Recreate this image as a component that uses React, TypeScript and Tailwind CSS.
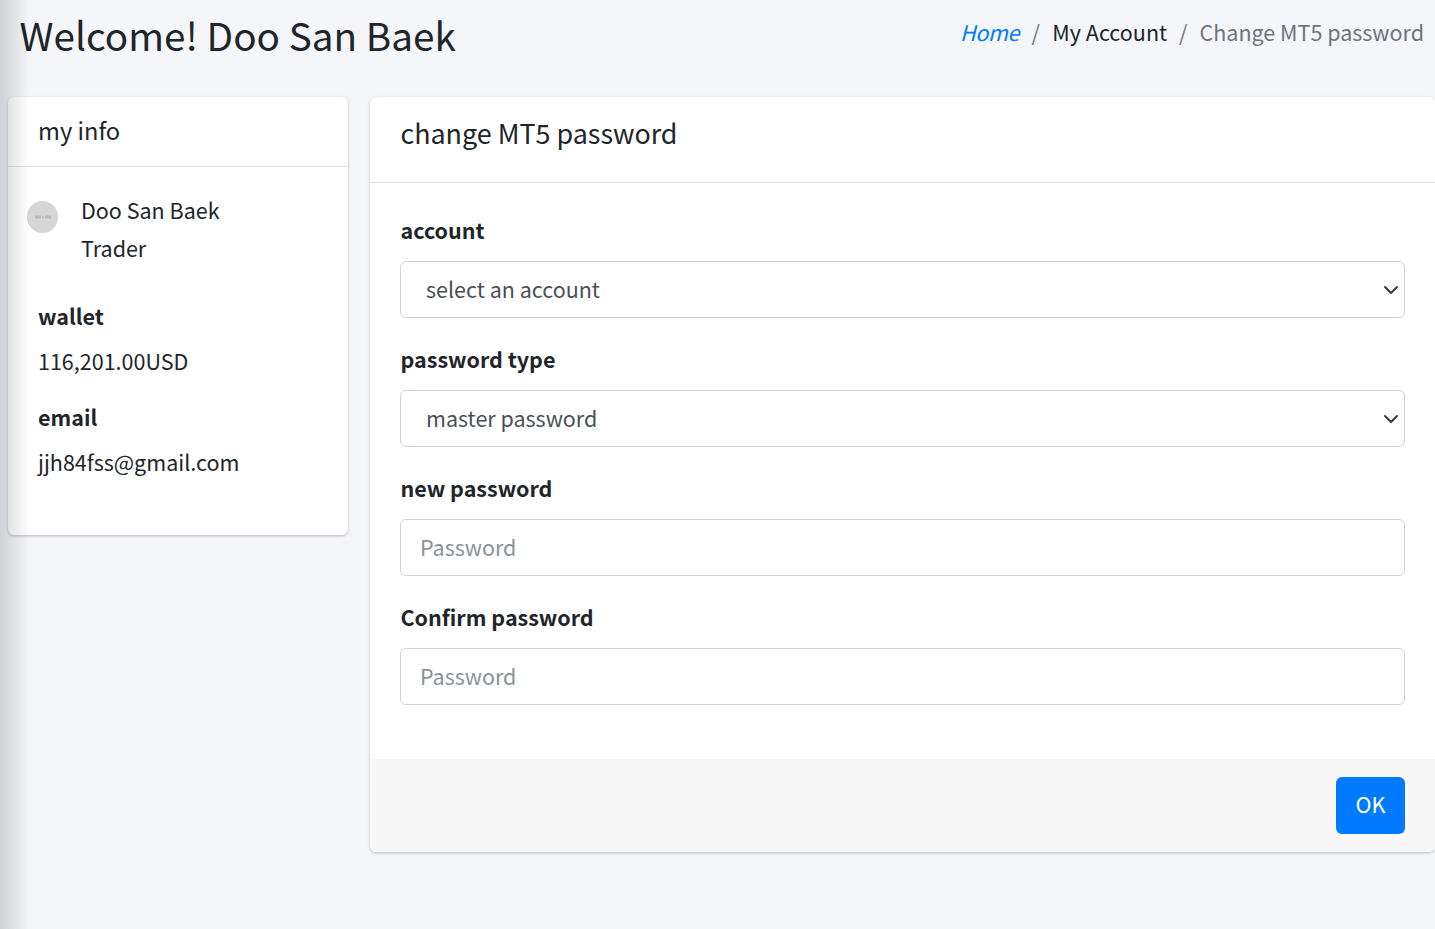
const font = { fontFamily: '"Noto Sans CJK KR", "Noto Sans", sans-serif' }

function Chevron() {
  return (
    <svg className="absolute right-[5px] top-[20px]" width="16" height="16" viewBox="0 0 16 16" fill="none">
      <path d="M2 5l6 6 6-6" stroke="#343a40" strokeWidth="2" strokeLinecap="round" strokeLinejoin="round" />
    </svg>
  )
}

function SelectField({ label, value, indent }: { label: string; value: string; indent: string }) {
  return (
    <div className="mb-[16px]">
      <label className="block h-[56px] pl-[0.5px] pt-[8px] text-[21.5px] leading-[33px] font-bold text-[#212529]">{label}</label>
      <div className={`relative h-[57px] rounded-[6px] border border-[#ced4da] bg-white text-[21.5px] leading-[53px] text-[#495057] ${indent}`}>
        {value}
        <Chevron />
      </div>
    </div>
  )
}

function InputField({ label }: { label: string }) {
  return (
    <div className="mb-[16px]">
      <label className="block h-[56px] pl-[0.5px] pt-[8px] text-[21.5px] leading-[33px] font-bold text-[#212529]">{label}</label>
      <input
        type="password"
        placeholder="Password"
        style={font}
        className="block h-[57px] w-full rounded-[6px] border border-[#ced4da] bg-white px-[19px] pb-[2px] text-[21.5px] placeholder:text-[#8a9299]"
      />
    </div>
  )
}

export default function App() {
  return (
    <div style={font} className="relative h-[929px] w-[1435px] overflow-hidden bg-[#f4f6fa] text-[#212529]">
      <div className="flex h-[97px] items-start justify-between pl-[19.5px] pr-[11px]">
        <h1 className="pt-[7px] text-[38.7px] leading-[54px] font-normal">Welcome! Doo San Baek</h1>
        <div className="flex pt-[15px] text-[21.5px] leading-[33px]">
          <span className="tracking-[-0.4px] text-[#007bff] italic">Home</span>
          <span className="px-[12.5px] text-[#6c757d]">/</span>
          <span>My Account</span>
          <span className="px-[12px] text-[#6c757d]">/</span>
          <span className="text-[#6c757d]">Change MT5 password</span>
        </div>
      </div>

      <div className="flex items-start gap-[22px] pl-[8px]">
        <div className="h-[438px] w-[340px] shrink-0 rounded-[6px] bg-white shadow-[0_1px_3px_rgba(0,0,0,0.25)]">
          <div className="h-[70px] border-b border-[#dee2e6] pl-[30px] pt-[15px] text-[23.65px] leading-[36px]">my info</div>
          <div className="flex pt-[24px]">
            <div className="ml-[19px] mt-[10px] flex h-[32px] w-[31px] items-center justify-center rounded-full bg-[#d6d6d6]">
              <svg width="16" height="4" viewBox="0 0 16 4">
                <rect x="0" y="0.5" width="6" height="3" fill="#bcbcbc" />
                <rect x="7" y="1.5" width="2" height="1.5" fill="#bcbcbc" />
                <rect x="10" y="0.5" width="6" height="3" fill="#bcbcbc" />
              </svg>
            </div>
            <div className="ml-[23px] text-[21.5px] leading-[38px]">
              <div>Doo San Baek</div>
              <div>Trader</div>
            </div>
          </div>
          <div className="pl-[30px] pt-[32px] text-[21.5px] leading-[33px]">
            <div className="font-bold">wallet</div>
            <div className="mt-[12px]">116,201.00USD</div>
            <div className="mt-[23px] font-bold">email</div>
            <div className="mt-[12px]">jjh84fss@gmail.com</div>
          </div>
        </div>

        <div className="h-[755px] w-[1065px] shrink-0 rounded-[6px] bg-white shadow-[0_1px_3px_rgba(0,0,0,0.25)]">
          <div className="h-[86px] border-b border-[#dee2e6] pl-[30.5px] pt-[16px] text-[26.875px] leading-[40px]">change MT5 password</div>
          <div className="h-[576px] px-[30px] pt-[22px]">
            <SelectField label="account" value="select an account" indent="pl-[25px]" />
            <SelectField label="password type" value="master password" indent="pl-[25px]" />
            <InputField label="new password" />
            <InputField label="Confirm password" />
          </div>
          <div className="flex h-[93px] items-start justify-end rounded-b-[6px] bg-[#f7f7f7] pr-[30px] pt-[18px]">
            <button className="h-[57px] w-[69px] rounded-[6px] bg-[#007bff] pb-[2px] text-[21.5px] text-white">OK</button>
          </div>
        </div>
      </div>

      <div className="pointer-events-none absolute inset-y-0 left-0 w-[30px] bg-gradient-to-r from-black/15 to-transparent" />
    </div>
  )
}
